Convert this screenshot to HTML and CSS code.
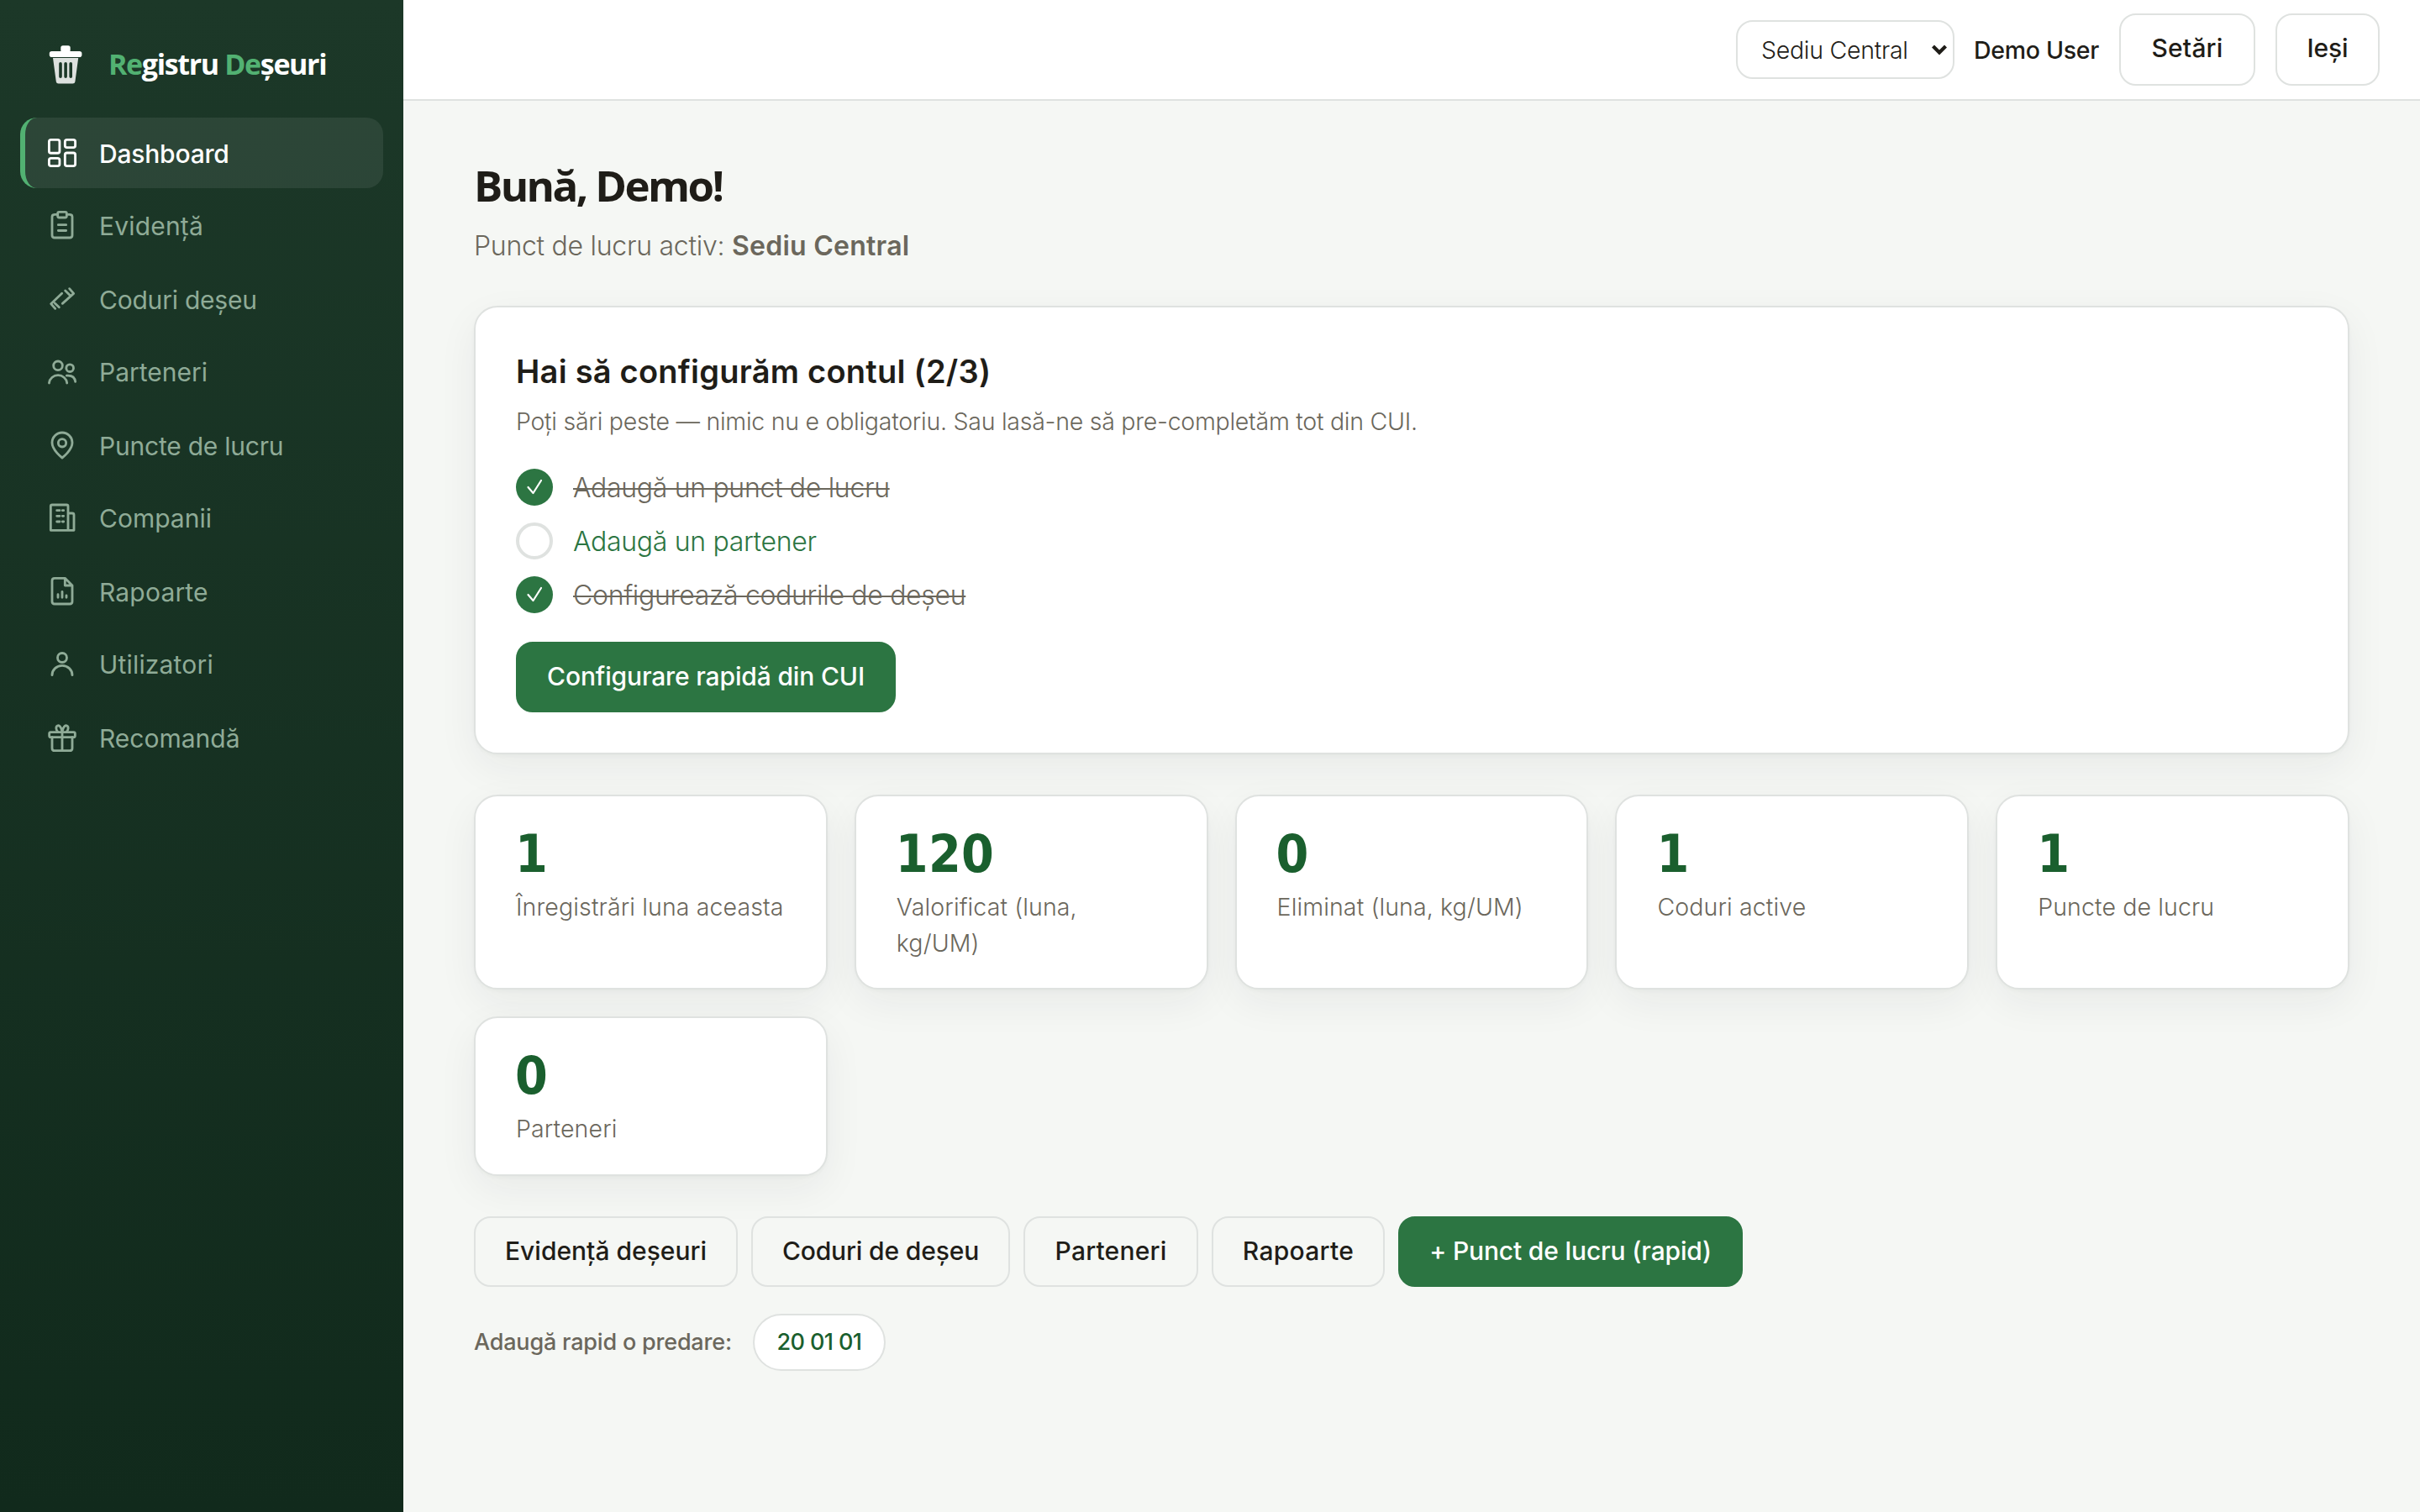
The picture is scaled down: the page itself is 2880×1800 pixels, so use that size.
FILE: index.html
```html
<!DOCTYPE html>
<html lang="ro">
<head>
<meta charset="utf-8">
<title>Registru Deșeuri</title>
<link rel="stylesheet" href="styles.css">
</head>
<body>
<div class="app">
  <aside class="sidebar">
    <div class="brand">
      <svg class="brand-icon" viewBox="0 0 40 48">
        <rect x="14.3" y="1.2" width="11.4" height="8" rx="2.6" fill="#fff"/>
        <rect x="0.8" y="8" width="38.6" height="7" rx="2.8" fill="#fff"/>
        <path fill="#fff" fill-opacity=".85" fill-rule="evenodd" d="M5 16H35.2L31.4 44.2Q31 46.6 28.6 46.6H11.600Q9.200 46.600 8.800 44.200ZM14 21Q12.200 21 12.200 22.800V38.200Q12.200 40 14 40T15.800 38.200V22.800Q15.800 21 14 21ZM20.100 21Q18.300 21 18.300 22.800V38.200Q18.300 40 20.100 40T21.900 38.200V22.800Q21.900 21 20.100 21ZM26.200 21Q24.400 21 24.400 22.800V38.200Q24.400 40 26.200 40T28 38.200V22.800Q28 21 26.200 21Z"/>
      </svg>
      <span class="brand-name"><em>Re</em>gistru <em>De</em>șeuri</span>
    </div>
    <nav class="nav">
      <a class="nav-item active">
        <svg class="icon" viewBox="0 0 120 120"><rect x="13.200" y="13.200" width="37.600" height="47.600" rx="7"/><rect x="70" y="13.200" width="36.800" height="27.600" rx="7"/><rect x="13.200" y="79.200" width="37.600" height="27.600" rx="7"/><rect x="70" y="60" width="36.800" height="46.800" rx="7"/></svg>
        <span class="lower">Dashboard</span></a>
      <a class="nav-item">
        <svg class="icon" viewBox="0 0 120 120"><path d="M44 19H33Q24 19 24 28V93Q24 102 33 102H87Q96 102 96 93V28Q96 19 87 19H76"/><rect x="44" y="10" width="32" height="20" rx="5"/><path d="M46 56H74M46 76.500H74"/></svg>
        <span class="wide">Evidență</span></a>
      <a class="nav-item">
        <svg class="icon" viewBox="0 0 120 120"><path d="M59 40L20 77L35 94M34 75L49 89M61 76L101 40L86 23M71 30L87 46"/></svg>
        <span class="tight lower">Coduri deșeu</span></a>
      <a class="nav-item">
        <svg class="icon" viewBox="0 0 120 120"><circle cx="45" cy="34" r="16"/><path d="M13.500 96V95A32 31 0 0 1 77 95V96"/><circle cx="87.500" cy="42.500" r="13"/><path d="M76 69.500Q104 67 107 91"/></svg>
        <span class="raise">Parteneri</span></a>
      <a class="nav-item">
        <svg class="icon" viewBox="0 0 120 120"><path d="M60 102C60 102 96 75 96 48A36 36 0 0 0 24 48C24 75 60 102 60 102Z"/><circle cx="60" cy="49" r="14"/></svg>
        <span class="tight">Puncte de lucru</span></a>
      <a class="nav-item">
        <svg class="icon" viewBox="0 0 120 120"><path d="M19 100V14Q19 9 24 9H76Q81 9 81 14V100ZM81 39H96Q102 39 102 45V100H81M41 29H51M61 29H65M41 49H51M61 49H65M41 69H51M61 69H65"/></svg>
        <span class="raise">Companii</span></a>
      <a class="nav-item">
        <svg class="icon" viewBox="0 0 120 120"><path d="M70 10H33Q24 10 24 19V93Q24 102 33 102H87Q96 102 96 93V36ZM70 10V36H96M45 68V79M60 58V79M75 72V79"/></svg>
        <span class="wide">Rapoarte</span></a>
      <a class="nav-item">
        <svg class="icon" viewBox="0 0 120 120"><circle cx="60" cy="33" r="16.500"/><path d="M24 95A36 34 0 0 1 96 95"/></svg>
        <span class="wide raise">Utilizatori</span></a>
      <a class="nav-item">
        <svg class="icon" viewBox="0 0 120 120"><rect x="14" y="35" width="92" height="18" rx="5"/><path d="M24 53V92Q24 101 33 101H87Q96 101 96 92V53M60 35V101M60 34C57 16 50 9 43 12C36 15 38 29 45 34M60 34C63 16 70 9 77 12C84 15 82 29 75 34"/></svg>
        <span class="raise">Recomandă</span></a>
    </nav>
  </aside>

  <div class="page">
    <header class="topbar">
      <div class="site-picker">
        <select class="site-select"><option>Sediu Central</option></select>
        <svg class="chevron" viewBox="0 0 20 14"><path d="M2.500 3L10 10.500L17.500 3"/></svg>
      </div>
      <span class="user">Demo User</span>
      <button class="btn btn-top settings">Setări</button>
      <button class="btn btn-top logout">Ieși</button>
    </header>

    <main class="main">
      <h1 class="greeting">Bună, Demo!</h1>
      <p class="subtitle"><span>Punct de lucru activ:</span> <strong>Sediu Central</strong></p>

      <section class="card setup">
        <h2 class="setup-title">Hai să configurăm contul (2/3)</h2>
        <p class="setup-text">Poți sări peste — nimic nu e obligatoriu. Sau lasă-ne să pre-completăm tot din CUI.</p>
        <ul class="steps">
          <li class="step done"><span class="mark"><svg viewBox="0 0 44 44"><path d="M14.500 22L20.500 29L30 14"/></svg></span><span class="step-name">Adaugă un punct de lucru</span></li>
          <li class="step"><span class="mark"></span><span class="step-name">Adaugă un partener</span></li>
          <li class="step done"><span class="mark"><svg viewBox="0 0 44 44"><path d="M14.500 22L20.500 29L30 14"/></svg></span><span class="step-name">Configurează codurile de deșeu</span></li>
        </ul>
        <button class="btn btn-primary quick-setup">Configurare rapidă din CUI</button>
      </section>

      <section class="stats">
        <div class="card stat"><div class="value">1</div><div class="label">Înregistrări luna aceasta</div></div>
        <div class="card stat"><div class="value">120</div><div class="label">Valorificat (luna,<br>kg/UM)</div></div>
        <div class="card stat"><div class="value">0</div><div class="label">Eliminat (luna, kg/UM)</div></div>
        <div class="card stat"><div class="value">1</div><div class="label">Coduri active</div></div>
        <div class="card stat"><div class="value">1</div><div class="label">Puncte de lucru</div></div>
        <div class="card stat"><div class="value">0</div><div class="label">Parteneri</div></div>
      </section>

      <div class="actions">
        <button class="btn records">Evidență deșeuri</button>
        <button class="btn codes">Coduri de deșeu</button>
        <button class="btn partners">Parteneri</button>
        <button class="btn reports">Rapoarte</button>
        <button class="btn btn-primary new-site">+ Punct de lucru (rapid)</button>
      </div>

      <div class="quick">
        <span class="quick-label">Adaugă rapid o predare:</span>
        <a class="chip">20 01 01</a>
      </div>
    </main>
  </div>
</div>
</body>
</html>
```
FILE: styles.css
```css
:root {
  --ink: #1f1d18;
  --muted: #6b675c;
  --line: #dfe2e0;
  --green: #2c7542;
  --green-dark: #1a5f2e;
  --accent: #52b172;
}
* { box-sizing: border-box; margin: 0; padding: 0; }
body {
  font-family: "Inter", "Liberation Sans", sans-serif;
  font-weight: 360;
  color: var(--ink);
  background: #f5f7f4;
}
.app { display: flex; height: 1800px; overflow: hidden; }

/* Sidebar */
.sidebar {
  flex: none;
  width: 480px;
  padding: 0 24px;
  background: linear-gradient(180deg, #1c3828, #112a1c);
}
.brand {
  display: flex;
  align-items: center;
  gap: 31px;
  height: 140px;
  padding: 14px 0 0 34px;
}
.brand-icon { flex: none; width: 40px; height: 48px; }
.brand-name {
  font: 700 34px/48px "Open Sans", "Noto Sans", sans-serif;
  letter-spacing: -1.35px;
  color: #fff;
  white-space: nowrap;
  padding-bottom: 3px;
}
.brand-name em { font-style: normal; color: var(--accent); }
.nav { display: flex; flex-direction: column; gap: 3.2px; }
.nav-item {
  display: flex;
  align-items: center;
  gap: 24px;
  height: 84px;
  padding-left: 24px;
  border-left: 6px solid transparent;
  border-radius: 20px;
  font-size: 30px;
  font-weight: 390;
  color: #8fab97;
}
.nav-item.active {
  background: rgba(255, 255, 255, .08);
  border-left-color: var(--accent);
  color: #fff;
  font-weight: 500;
  letter-spacing: -.2px;
}
.wide { letter-spacing: .18px; }
.tight { letter-spacing: -.22px; }
.lower { padding-top: 2px; }
.raise { padding-bottom: 2px; }
.icon {
  flex: none;
  width: 40px;
  height: 40px;
  fill: none;
  stroke: currentColor;
  stroke-width: 8.5;
  stroke-linecap: round;
  stroke-linejoin: round;
}

/* Top bar */
.page { flex: 1; }
.topbar {
  display: flex;
  align-items: center;
  justify-content: flex-end;
  gap: 24px;
  height: 120px;
  padding-right: 48px;
  background: #fff;
  border-bottom: 2px solid var(--line);
}
.site-picker { display: grid; align-items: center; width: 260px; }
.site-select, .chevron { grid-area: 1 / 1; }
.site-select {
  appearance: none;
  width: 260px;
  height: 70px;
  padding-left: 28px;
  border: 2px solid var(--line);
  border-radius: 20px;
  background: #fff;
  font: 360 28.5px "Inter", sans-serif;
  letter-spacing: -.27px;
  color: var(--ink);
}
.chevron {
  justify-self: end;
  width: 20px;
  height: 14px;
  margin-right: 8px;
  fill: none;
  stroke: var(--ink);
  stroke-width: 4.200;
  pointer-events: none;
}
.user { width: 149px; margin-left: -1px; font-size: 28.5px; font-weight: 550; letter-spacing: -.3px; white-space: nowrap; }

/* Buttons */
.btn {
  height: 84px;
  padding-bottom: 2px;
  border: 2px solid var(--line);
  border-radius: 20px;
  background: transparent;
  font: 500 30px "Inter", sans-serif;
  letter-spacing: -.15px;
  color: var(--ink);
  white-space: nowrap;
}
.btn-top { height: 86px; padding-bottom: 4px; font-weight: 550; background: #fff; }
.btn-primary { background: var(--green); border-color: var(--green); color: #fff; }
.settings { width: 162px; letter-spacing: .2px; }
.logout { width: 124px; }
.quick-setup { display: block; width: 452px; }
.records { width: 314px; letter-spacing: 0; }
.codes { width: 308px; }
.partners { width: 208px; letter-spacing: .2px; }
.reports { width: 206px; letter-spacing: .3px; }
.new-site { width: 410px; }

/* Content */
.main { padding: 64px 84px 0; }
.greeting {
  height: 73px;
  font: 700 51px/73px "Open Sans", "Noto Sans", sans-serif;
  letter-spacing: -2.6px;
}
.subtitle {
  margin: 12px 0 47px;
  font-size: 32px;
  line-height: 48px;
  letter-spacing: -.27px;
  color: var(--muted);
}
.subtitle strong { font-weight: 600; letter-spacing: .25px; }
.card {
  background: #fff;
  border: 2px solid var(--line);
  border-radius: 28px;
  box-shadow: 0 2px 4px rgba(28, 56, 41, .03), 0 16px 48px rgba(28, 40, 50, .06);
}
.setup { padding: 48px; }
.setup-title { font-size: 38px; font-weight: 600; line-height: 56px; letter-spacing: .24px; }
.setup-text {
  margin: 10px 0 34px;
  font-size: 28.5px;
  line-height: 44px;
  letter-spacing: -.26px;
  color: var(--muted);
}
.steps { display: grid; gap: 20px; margin-bottom: 34px; list-style: none; }
.step {
  display: flex;
  align-items: center;
  gap: 24px;
  height: 44px;
  font-size: 32px;
  letter-spacing: -.32px;
  color: var(--green);
}
.mark {
  flex: none;
  width: 44px;
  height: 44px;
  border: 4px solid var(--line);
  border-radius: 50%;
}
.done { color: var(--muted); }
.done .mark { border: 0; background: var(--green); }
.done .step-name { text-decoration: line-through; text-decoration-thickness: 2px; }
.mark svg { display: block; fill: none; stroke: #fff; stroke-width: 2.200; stroke-linecap: round; stroke-linejoin: round; }

.stats {
  display: grid;
  grid-template-columns: repeat(5, 1fr);
  gap: 32px;
  margin: 48px 0;
}
.stat { padding: 32px 44px 32px 48px; }
.value {
  margin: 0 0 5px -1px;
  font: 700 62px/73px "DejaVu Sans Condensed", "DejaVu Sans", sans-serif;
  font-stretch: condensed;
  letter-spacing: .3px;
  color: var(--green-dark);
}
.label { font-size: 28.5px; line-height: 43.200px; letter-spacing: .12px; color: var(--muted); }
.actions { display: flex; gap: 16px; }
.quick { display: flex; align-items: center; gap: 24px; margin-top: 32px; font-size: 27px; font-weight: 500; }
.quick-label { width: 308px; letter-spacing: -.2px; color: var(--muted); white-space: nowrap; }
.chip {
  width: 158px;
  height: 68px;
  border: 2px solid var(--line);
  border-radius: 34px;
  background: #fff;
  line-height: 64px;
  text-align: center;
  letter-spacing: -.6px;
  color: var(--green-dark);
}
```
